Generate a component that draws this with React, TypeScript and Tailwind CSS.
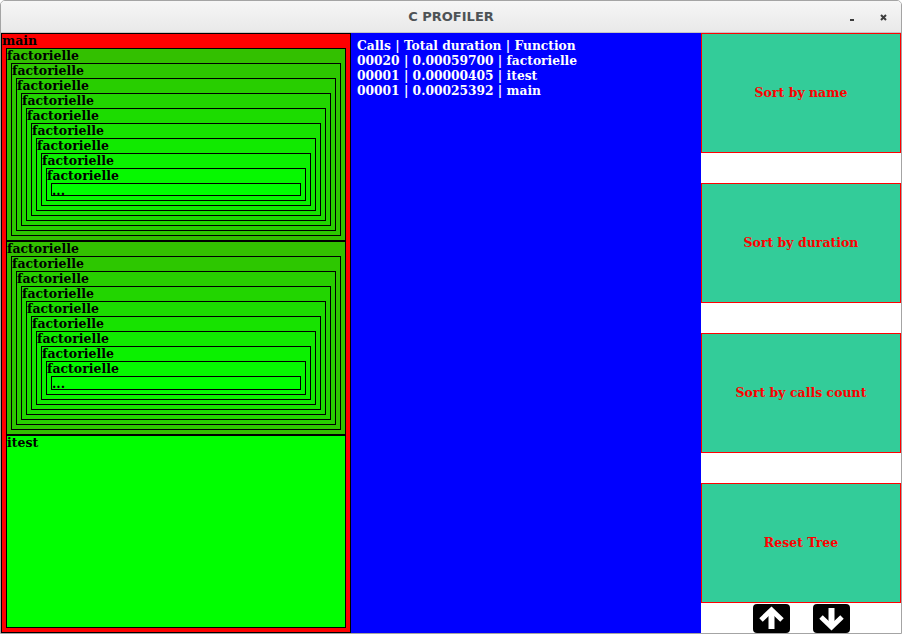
import React from 'react'

type TreeNode = {
  name: string
  children?: TreeNode[]
}

// outer -> inner shades for the non-leaf call boxes
const greens = [
  'bg-[#33c000]',
  'bg-[#2dc700]',
  'bg-[#28ce00]',
  'bg-[#22d500]',
  'bg-[#1cdc00]',
  'bg-[#17e300]',
  'bg-[#11ea00]',
  'bg-[#0bf100]',
  'bg-[#06f800]',
  'bg-[#00ff00]'
]

const recursion = (levels: number): TreeNode =>
  levels === 0
    ? { name: '...' }
    : { name: 'factorielle', children: [recursion(levels - 1)] }

const tree: TreeNode = {
  name: 'main',
  children: [recursion(9), recursion(9), { name: 'itest' }]
}

const stats = [
  'Calls | Total duration | Function',
  '00020 | 0.00059700 | factorielle',
  '00001 | 0.00000405 | itest',
  '00001 | 0.00025392 | main'
]

const actions = ['Sort by name', 'Sort by duration', 'Sort by calls count', 'Reset Tree']

function CallBox({ node, depth }: { node: TreeNode; depth: number }) {
  const leaf = !node.children
  let bg = 'bg-[#00ff00]'
  if (depth === 0) bg = 'bg-[#ff0000]'
  else if (!leaf) bg = greens[depth - 1]

  return (
    <div className={`flex min-h-0 flex-1 flex-col border border-black ${bg}`}>
      <div className="h-[14px] shrink-0 whitespace-nowrap leading-[14px]">{node.name}</div>
      {node.children && (
        <div className="flex min-h-0 flex-1 flex-col px-[4px] pb-[4px]">
          {node.children.map((child, i) => (
            <CallBox key={i} node={child} depth={depth + 1} />
          ))}
        </div>
      )}
    </div>
  )
}

function Arrow({ down }: { down?: boolean }) {
  return (
    <div className="flex h-[29px] w-[37px] items-center justify-center rounded-[4px] bg-black">
      <svg width="37" height="29" viewBox="0 0 37 29" className={down ? 'rotate-180' : ''}>
        <path d="M8 16 L18.5 6 L29 16" fill="none" stroke="white" strokeWidth="5" strokeLinejoin="miter" />
        <path d="M18.5 8 V25" stroke="white" strokeWidth="6" />
      </svg>
    </div>
  )
}

export default function App() {
  return (
    <div className="flex h-[634px] w-[902px] flex-col overflow-hidden rounded-t-[5px] border border-[#a4a4a4] bg-white font-['DejaVu_Serif',serif] text-[12.5px] font-bold">
      {/* Title bar */}
      <div className="relative flex h-[32px] shrink-0 items-center justify-center border-b border-[#c4c4c4] bg-gradient-to-b from-[#f6f6f6] to-[#e9e9e9]">
        <span className="font-['DejaVu_Sans',sans-serif] text-[13px] font-bold text-[#4e5356]">C PROFILER</span>
        <div className="absolute right-[14px] top-[12px] flex items-center gap-[26px]">
          <div className="mt-[6px] h-[2px] w-[4px] bg-[#3c3c3c]" />
          <svg width="7" height="7" viewBox="0 0 7 7">
            <path d="M1 1 L6 6 M6 1 L1 6" stroke="#3c3c3c" strokeWidth="2" />
          </svg>
        </div>
      </div>

      <div className="flex h-[600px]">
        {/* Call tree */}
        <div className="flex w-[350px] flex-col text-black">
          <CallBox node={tree} depth={0} />
        </div>

        {/* Stats */}
        <div className="w-[350px] bg-[#0000ff] pl-[6px] pt-[5px] text-[12.25px] leading-[15px] text-white">
          {stats.map((line) => (
            <div key={line} className="whitespace-nowrap">{line}</div>
          ))}
        </div>

        {/* Actions */}
        <div className="flex w-[200px] flex-col bg-white">
          <div className="flex flex-col gap-[30px]">
            {actions.map((label) => (
              <div
                key={label}
                className="flex h-[120px] items-center justify-center border border-[#ff0000] bg-[#33cc99] text-[#ff0000]"
              >
                {label}
              </div>
            ))}
          </div>
          <div className="flex h-[30px] justify-center gap-[23px] pt-[1px]">
            <Arrow />
            <Arrow down />
          </div>
        </div>
      </div>
    </div>
  )
}
